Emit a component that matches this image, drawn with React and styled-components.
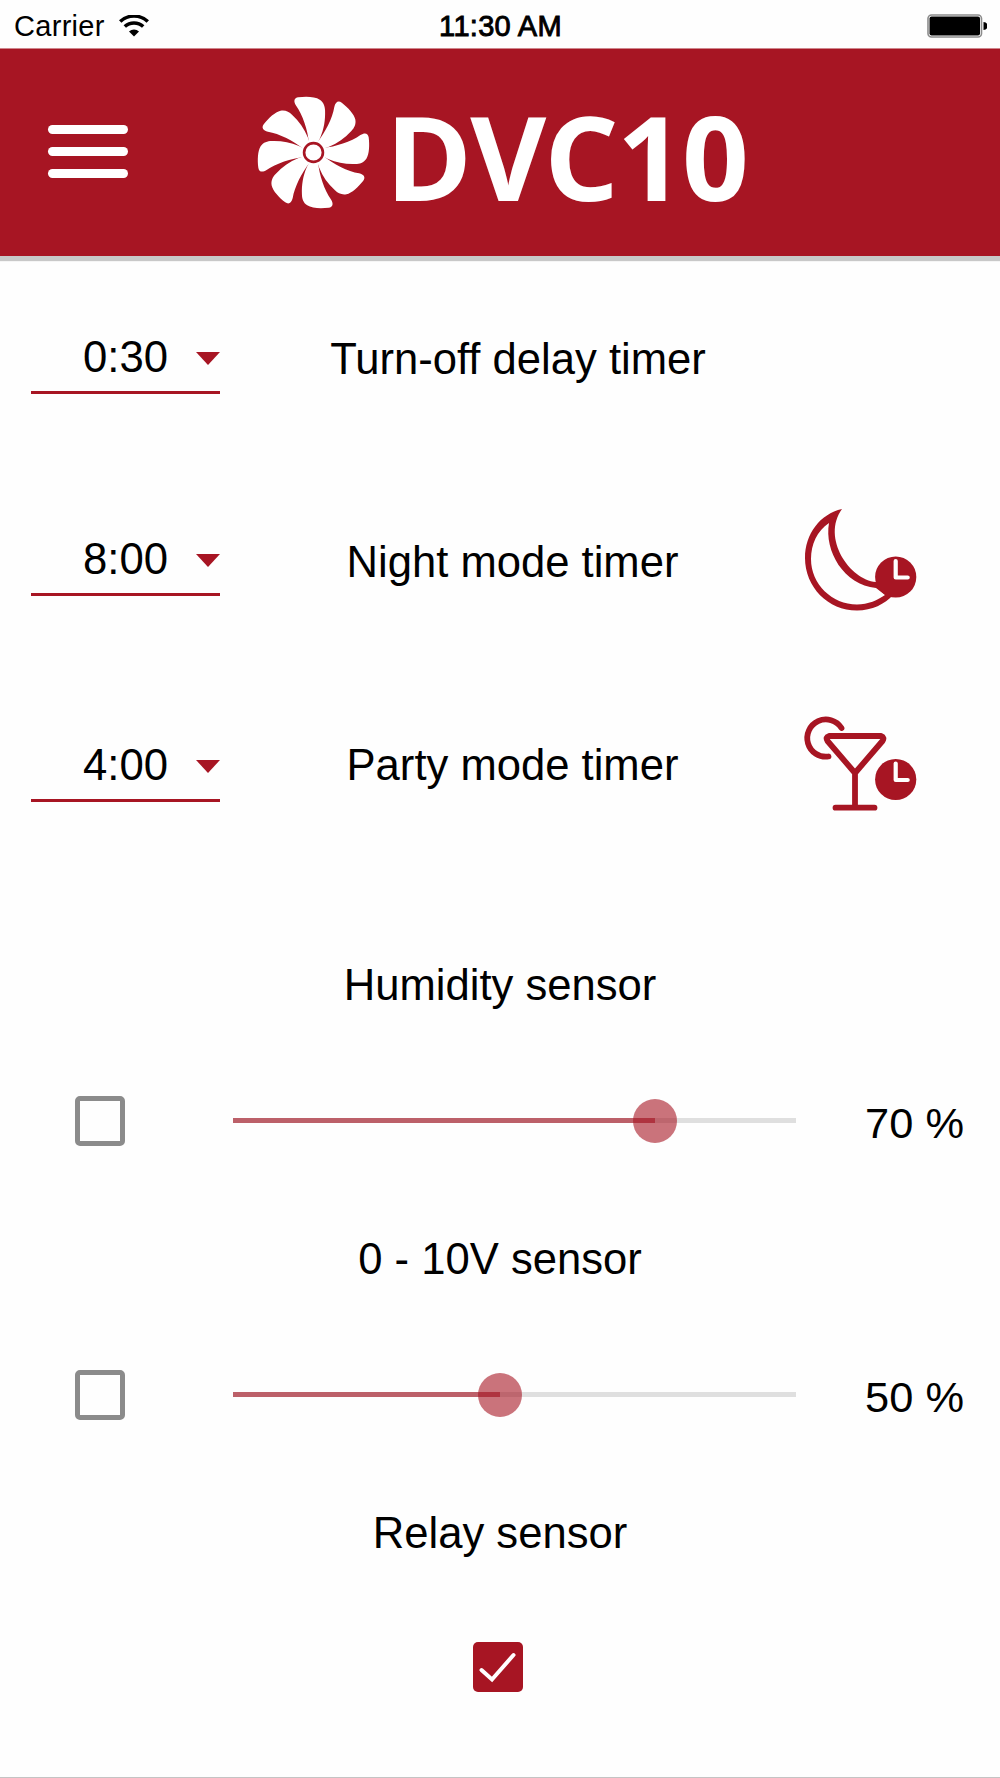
import React, { useState } from "react";
import styled, { createGlobalStyle } from "styled-components";

const RED = "#a71523";

const GlobalStyle = createGlobalStyle`
  * {
    box-sizing: border-box;
  }

  body {
    margin: 0;
    background: #fefefe;
    color: #000;
    font-family: "Liberation Sans", Arial, sans-serif;
  }
`;

const Screen = styled.div`
  display: flex;
  flex-direction: column;
  width: 1000px;
  height: 1778px;
  overflow: hidden;
  background: #fefefe;
  border-bottom: 1px solid #c4c4c4;
`;

const StatusBar = styled.div`
  display: grid;
  grid-template-columns: 1fr auto 1fr;
  align-items: center;
  flex: none;
  height: 48px;
  padding: 3px 13px 0 14px;
  font-size: 29px;
  line-height: 32px;
  letter-spacing: 0.3px;
`;

const Carrier = styled.div`
  display: flex;
  align-items: center;
  gap: 14px;
`;

const Clock = styled.div`
  -webkit-text-stroke: 0.9px #000;
`;

const BatteryIcon = styled.svg`
  justify-self: end;
`;

const Header = styled.header`
  display: flex;
  align-items: center;
  flex: none;
  height: 208px;
  padding-left: 48px;
  background: ${RED};
  border-top: 1px solid #cf858c;
  box-shadow: 0 5px 1px #c8c8c8;
`;

const MenuButton = styled.button`
  display: flex;
  flex-direction: column;
  gap: 13px;
  width: 80px;
  margin: 0 129px 2px 0;
  padding: 0;
  border: none;
  background: none;
  cursor: pointer;
`;

const MenuLine = styled.span`
  height: 9.3px;
  border-radius: 4.5px;
  background: #fff;
`;

const Brand = styled.div`
  display: flex;
  align-items: center;
`;

const BrandName = styled.span`
  margin: 7px 0 0 15.5px;
  color: #fff;
  font-family: "Open Sans", "Noto Sans", sans-serif;
  font-size: 117px;
  font-weight: 700;
  line-height: 120px;
  letter-spacing: -1.9px;
`;

const Timers = styled.section`
  flex: none;
  padding-top: 54px;
`;

const TimerRow = styled.div`
  display: grid;
  grid-template-columns: 220px 560px 1fr;
  align-items: start;
  height: ${(props) => props.$height}px;
`;

const Select = styled.div`
  display: flex;
  align-items: center;
  justify-content: flex-end;
  gap: 28px;
  width: 189px;
  height: 84px;
  margin-left: 31px;
  padding-top: 13px;
  border-bottom: 3px solid ${RED};
  font-size: 43.7px;
  cursor: pointer;
`;

const Arrow = styled.span`
  margin-top: 3px;
  border: 12.5px solid transparent;
  border-top: 13px solid ${RED};
  border-bottom: none;
`;

const TimerLabel = styled.div`
  padding: ${(props) => props.$top}px 0 0 ${(props) => (props.$wide ? 25 : 36)}px;
  font-size: 43.6px;
  line-height: 50px;
  text-align: center;
`;

const TimerIcon = styled.svg`
  margin: ${(props) => props.$top}px 0 0 10px;
`;

const Sensor = styled.section`
  flex: none;
  height: 274px;
`;

const SensorTitle = styled.h2`
  margin: 0;
  font-size: 43.6px;
  font-weight: 400;
  line-height: 50px;
  text-align: center;
`;

const SensorControls = styled.div`
  display: grid;
  grid-template-columns: 158px 563px 1fr;
  align-items: center;
  height: 50px;
  margin-top: 83px;
  padding: 0 36px 0 75px;
`;

const Box = styled.button`
  width: 50px;
  height: 50px;
  padding: 0;
  border: ${(props) => (props.$checked ? "none" : "5.5px solid #8b8b8b")};
  border-radius: 5px;
  background: ${(props) => (props.$checked ? RED : "transparent")};
  cursor: pointer;

  svg {
    display: block;
  }
`;

const RelayBox = styled.div`
  display: flex;
  justify-content: center;
  margin-top: 84px;
  padding-right: 5px;
`;

const Track = styled.div`
  position: relative;
  height: 5px;
  background: #dfdfdf;
`;

const Fill = styled.div`
  height: 5px;
  background: #bc6069;
`;

const Thumb = styled.div`
  position: absolute;
  top: 50%;
  width: 44px;
  height: 44px;
  margin: -22px 0 0 -22px;
  border-radius: 50%;
  background: rgba(167, 21, 35, 0.6);
`;

const Value = styled.div`
  padding-top: 5px;
  font-size: 43.4px;
  line-height: 50px;
  text-align: right;
`;

const Fan = () => (
  <svg width="113" height="113" viewBox="-171 -171 342 342">
    {[0, 45, 90, 135, 180, 225, 270, 315].map((angle) => (
      <path
        key={angle}
        transform={`rotate(${angle})`}
        fill="#fff"
        d="M-14 -30 C-17 -65 -33 -115 -53 -142 C-61 -155 -59 -165 -46 -167 C-22 -170 5 -169 19 -160 C31 -152 35 -139 35 -127 C36 -98 32 -71 20 -44 L13 -30 L0 0 Z"
      />
    ))}
    <circle r="28.5" fill="#fff" stroke={RED} strokeWidth="8" />
  </svg>
);

const Wifi = () => (
  <svg width="30" height="22" viewBox="0 0 30 22">
    <g fill="none" stroke="#000" strokeWidth="3.5">
      <path d="M1.2 6.6 A20 20 0 0 1 28.8 6.6" />
      <path d="M5.8 11.6 A13.4 13.4 0 0 1 24.2 11.6" />
    </g>
    <path d="M15 21.5 L10 16.6 A7.2 7.2 0 0 1 20 16.6 Z" />
  </svg>
);

const Battery = () => (
  <BatteryIcon width="60" height="24" viewBox="0 0 60 24">
    <rect x="1" y="1" width="53.5" height="22" rx="3.5" fill="#fff" stroke="#8c8c8c" strokeWidth="1.6" />
    <rect x="2.5" y="2.5" width="50.5" height="19" rx="2" />
    <path d="M56.5 8 A4 4 0 0 1 56.5 16 Z" />
  </BatteryIcon>
);

const ClockBadge = ({ y }) => (
  <g transform={`translate(105.7 ${y})`}>
    <circle r="20.6" fill={RED} />
    <path d="M0 -16 V0.5 H12" fill="none" stroke="#fff" strokeWidth="4.2" strokeLinecap="round" strokeLinejoin="round" />
  </g>
);

const Moon = () => (
  <TimerIcon $top={-22} width="140" height="140" viewBox="0 0 140 140">
    <path
      d="M52 19 C30 24 15 44 15 68 C15 97 38 120.5 67 120.5 C82 120.5 95 114 103 105 L86 92 C60 90 31 48 52 19 Z
        M39 33 C27 41 21 54 21 69 C21 94 42 114.5 67 114.5 C78 114.5 88 110 95 105 L86 98 C54 95 34 61 39 33 Z"
      fill={RED}
      fillRule="evenodd"
    />
    <ClockBadge y={87} />
  </TimerIcon>
);

const Cocktail = () => (
  <TimerIcon $top={-18} width="140" height="140" viewBox="0 0 140 140">
    <g fill="none" stroke={RED} strokeWidth="5.8" strokeLinecap="round" strokeLinejoin="round">
      <path d="M51.5 28 A18.6 18.6 0 1 0 38.5 56.5" />
      <path d="M39 36 H91 Q95 37.5 92.5 41 L65 73 L37.5 41 Q35 37 39 36 Z M65 73 V107 M45.5 107.7 H84.5" />
    </g>
    <ClockBadge y={79.5} />
  </TimerIcon>
);

const Checkbox = ({ checked, onChange }) => (
  <Box type="button" $checked={checked} onClick={onChange}>
    {checked && (
      <svg width="50" height="50" viewBox="0 0 50 50">
        <path
          d="M8.5 28 L19 37.5 L40.5 13"
          fill="none"
          stroke="#fff"
          strokeWidth="4"
          strokeLinecap="round"
        />
      </svg>
    )}
  </Box>
);

const Slider = ({ position }) => (
  <Track>
    <Fill style={{ width: `${position}%` }} />
    <Thumb style={{ left: `${position}%` }} />
  </Track>
);

const timers = [
  { label: "Turn-off delay timer", value: "0:30", height: 202, top: 24 },
  { label: "Night mode timer", value: "8:00", height: 206, top: 25, icon: <Moon /> },
  { label: "Party mode timer", value: "4:00", height: 242, top: 22, icon: <Cocktail /> },
];

const sensors = [
  { name: "humidity", title: "Humidity sensor", value: 70, position: 74.9 },
  { name: "voltage", title: "0 - 10V sensor", value: 50, position: 47.4 },
];

export default function App() {
  const [enabled, setEnabled] = useState({
    humidity: false,
    voltage: false,
    relay: true,
  });

  const toggle = (name) => {
    setEnabled({ ...enabled, [name]: !enabled[name] });
  };

  return (
    <>
      <GlobalStyle />
      <Screen>
        <StatusBar>
          <Carrier>
            Carrier
            <Wifi />
          </Carrier>
          <Clock>11:30 AM</Clock>
          <Battery />
        </StatusBar>
        <Header>
          <MenuButton type="button" aria-label="Menu">
            <MenuLine />
            <MenuLine />
            <MenuLine />
          </MenuButton>
          <Brand>
            <Fan />
            <BrandName>DVC10</BrandName>
          </Brand>
        </Header>
        <Timers>
          {timers.map((timer) => (
            <TimerRow key={timer.label} $height={timer.height}>
              <Select>
                {timer.value}
                <Arrow />
              </Select>
              <TimerLabel $top={timer.top} $wide={Boolean(timer.icon)}>
                {timer.label}
              </TimerLabel>
              {timer.icon}
            </TimerRow>
          ))}
        </Timers>
        {sensors.map((sensor) => (
          <Sensor key={sensor.name}>
            <SensorTitle>{sensor.title}</SensorTitle>
            <SensorControls>
              <Checkbox
                checked={enabled[sensor.name]}
                onChange={() => toggle(sensor.name)}
              />
              <Slider position={sensor.position} />
              <Value>{sensor.value} %</Value>
            </SensorControls>
          </Sensor>
        ))}
        <Sensor>
          <SensorTitle>Relay sensor</SensorTitle>
          <RelayBox>
            <Checkbox
              checked={enabled.relay}
              onChange={() => toggle("relay")}
            />
          </RelayBox>
        </Sensor>
      </Screen>
    </>
  );
}
